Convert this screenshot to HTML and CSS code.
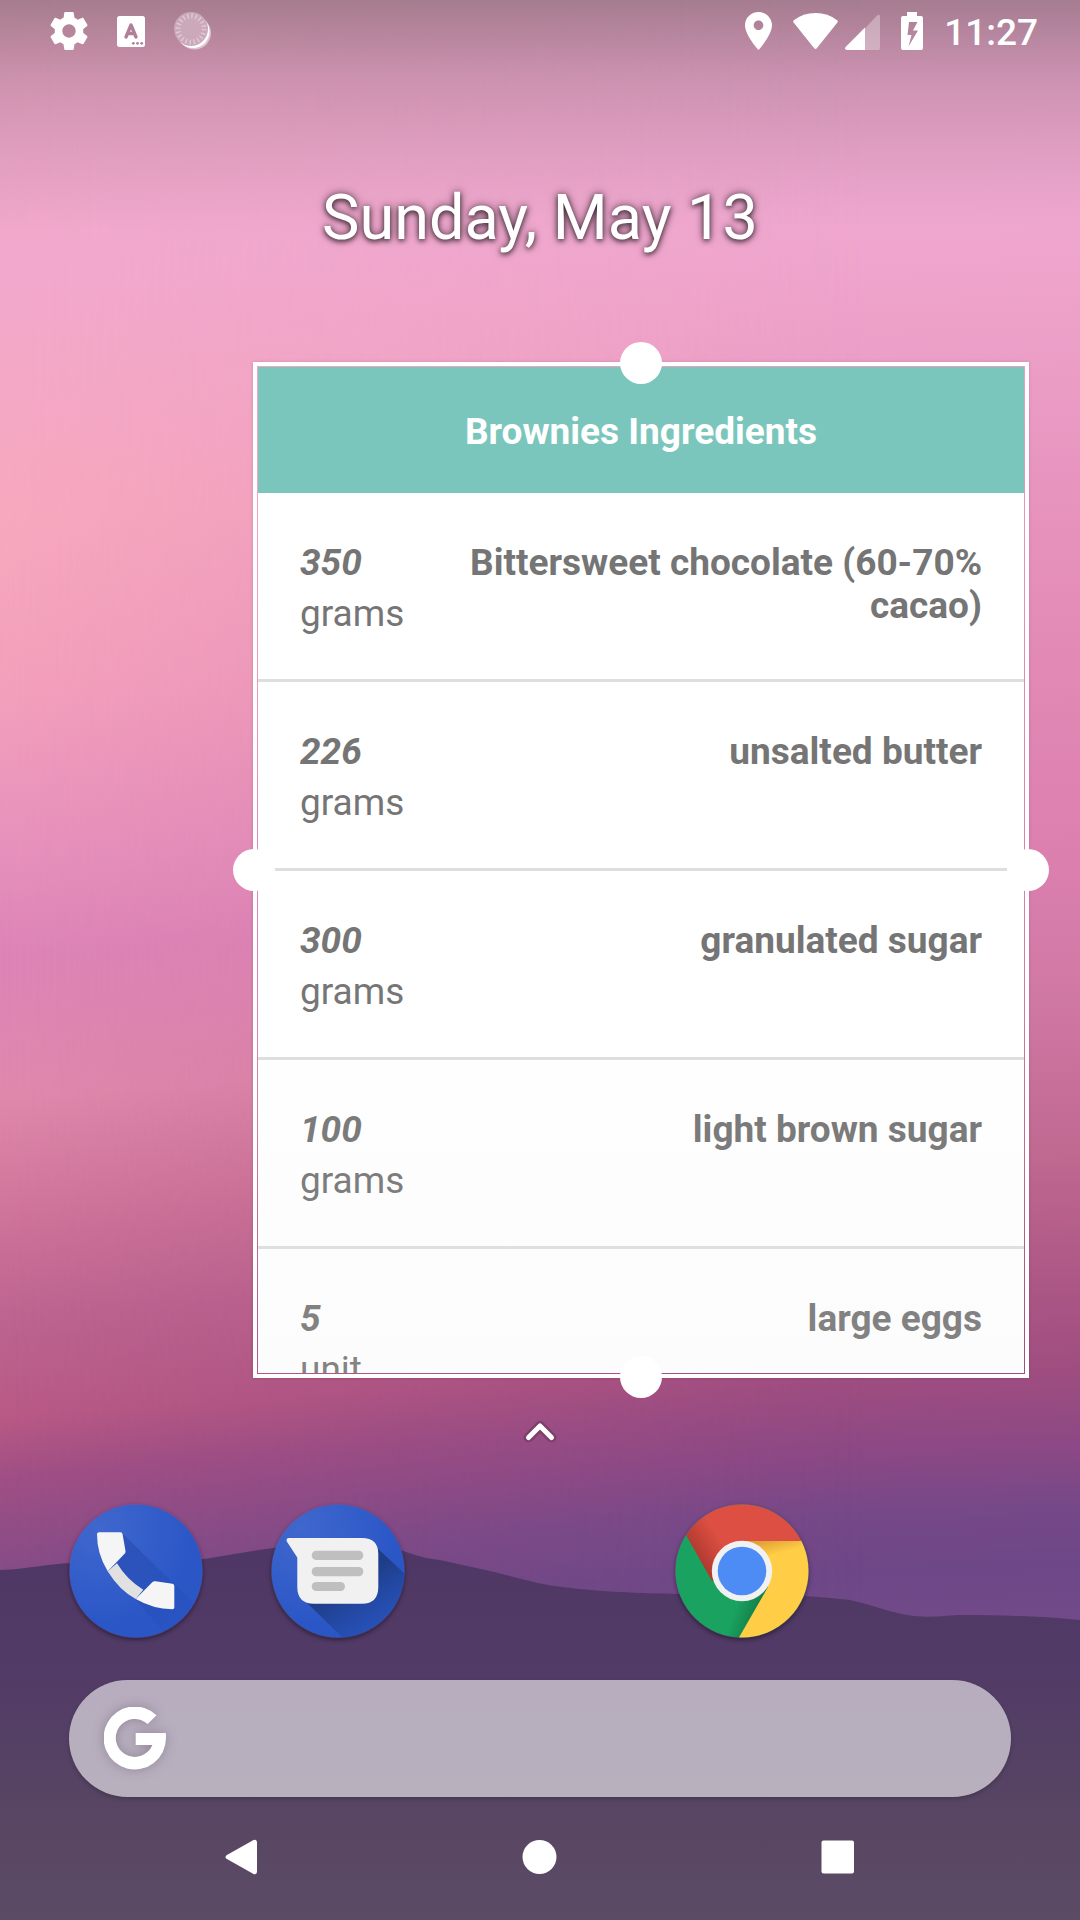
FILE: index.html
```html
<!DOCTYPE html>
<html lang="en">
<head>
<meta charset="utf-8">
<meta name="viewport" content="width=device-width, initial-scale=1">
<title>Home screen</title>
<link rel="stylesheet" href="styles.css">
</head>
<body>
<div class="screen">
  <div class="wallpaper" aria-hidden="true">
    <svg class="hills" viewBox="0 0 1080 1920" preserveAspectRatio="none">
      <defs>
        <linearGradient id="hill" x1="0" y1="0" x2="0" y2="1">
          <stop offset="0" stop-color="#4f3765"/>
          <stop offset=".35" stop-color="#523b66"/>
          <stop offset=".7" stop-color="#574563"/>
          <stop offset="1" stop-color="#5c4b65"/>
        </linearGradient>
      </defs>
      <path fill="url(#hill)" d="M0 1570C30 1569 50 1563 75 1563C120 1563 160 1563 203 1559C230 1555 250 1551 273 1548C310 1542 370 1542 403 1551C420 1557 430 1559 440 1560L490 1571C520 1578 540 1585 563 1587C600 1592 640 1593 680 1594C740 1593 790 1593 850 1600C880 1607 890 1613 915 1616C935 1618 945 1615 965 1615C1000 1615 1040 1616 1080 1620V1920H0Z"/>
    </svg>
  </div>

  <header class="status">
    <div class="status-group">
      <svg width="38" height="38" viewBox="2.2 2 19.6 20"><path fill="#fff" d="M19.43 12.98c.04-.32.07-.64.07-.98s-.03-.66-.07-.98l2.11-1.65c.19-.15.24-.42.12-.64l-2-3.46c-.12-.22-.39-.3-.61-.22l-2.49 1c-.52-.4-1.08-.73-1.69-.98l-.38-2.65C14.46 2.18 14.25 2 14 2h-4c-.25 0-.46.18-.49.42l-.38 2.65c-.61.25-1.17.59-1.69.98l-2.49-1c-.23-.09-.49 0-.61.22l-2 3.46c-.13.22-.07.49.12.64l2.11 1.65c-.04.32-.07.65-.07.98s.03.66.07.98l-2.11 1.65c-.19.15-.24.42-.12.64l2 3.46c.12.22.39.3.61.22l2.49-1c.52.4 1.08.73 1.69.98l.38 2.65c.03.24.24.42.49.42h4c.25 0 .46-.18.49-.42l.38-2.65c.61-.25 1.17-.59 1.69-.98l2.49 1c.23.09.49 0 .61-.22l2-3.46c.12-.22.07-.49-.12-.64l-2.11-1.65zM12 15.5c-1.93 0-3.5-1.57-3.5-3.5s1.57-3.5 3.5-3.5 3.5 1.57 3.5 3.5-1.57 3.5-3.5 3.5z"/></svg>
      <svg width="28" height="31" viewBox="0 0 28 31"><rect width="28" height="31" rx="2.5" fill="#fff"/><path d="M9 21L14 9L19 21M11 17.500H17" fill="none" stroke="#b27f98" stroke-width="3.400" stroke-linecap="round" stroke-linejoin="round"/><g fill="#b27f98"><circle cx="16.300" cy="27.300" r="1.400"/><circle cx="20.500" cy="27.300" r="1.400"/><circle cx="24.700" cy="27.300" r="1.400"/></g></svg>
      <svg width="38" height="38" viewBox="0 0 38 38"><circle cx="20.500" cy="21" r="16.500" fill="#fff" opacity=".5"/><circle cx="19" cy="19.500" r="16.500" fill="#fff"/><circle cx="17" cy="17" r="17" fill="#cba9ba"/><circle cx="17" cy="17" r="13" fill="none" stroke="#fff" stroke-opacity=".4" stroke-width="5" stroke-dasharray="1.300 2.784"/></svg>
    </div>
    <div class="status-group status-system">
      <svg width="27" height="38" viewBox="5 2 14 20" preserveAspectRatio="none"><path fill="#fff" d="M12 2C8.130 2 5 5.130 5 9c0 5.250 7 13 7 13s7-7.750 7-13c0-3.870-3.130-7-7-7zm0 9.500c-1.380 0-2.500-1.120-2.500-2.500s1.120-2.500 2.500-2.500 2.500 1.120 2.500 2.500-1.120 2.500-2.500 2.500z"/></svg>
      <div class="network">
        <svg width="45" height="38" viewBox="0 0 45 38"><path fill="#fff" d="M.6 10.500Q-.3 9.300.9 8.300Q10 1 22.500 1T44.100 8.300Q45.300 9.300 44.400 10.500L24 36Q22.500 37.800 21 36Z"/></svg>
        <svg width="35" height="38" viewBox="0 0 35 38"><path fill="#fff" opacity=".32" d="M20 16.500L32 3.500Q35 1.500 35 4.500V36Q35 38 33 38H20Z"/><path fill="#fff" d="M20 15.500V38H2Q-1 37.500.6 35Z"/></svg>
      </div>
      <svg width="22" height="38" viewBox="0 0 22 38"><path fill="#fff" fill-rule="evenodd" d="M6 0H16V4H20Q22 4 22 6V36Q22 38 20 38H2Q0 38 0 36V6Q0 4 2 4H6ZM8 10L6.500 23H10.500L7.500 34.500L17 18.500H12L16.500 10Z"/></svg>
      <time class="clock">11:27</time>
    </div>
  </header>

  <h1 class="date">Sunday, May 13</h1>

  <main class="widget">
    <section class="card">
      <h2 class="card-title">Brownies Ingredients</h2>
      <div class="scroller">
        <table class="ingredients">
          <tbody>
            <tr><td class="amount"><em>350</em><span>grams</span></td><th scope="row">Bittersweet chocolate (60-70% cacao)</th></tr>
            <tr><td class="amount"><em>226</em><span>grams</span></td><th scope="row">unsalted butter</th></tr>
            <tr><td class="amount"><em>300</em><span>grams</span></td><th scope="row">granulated sugar</th></tr>
            <tr><td class="amount"><em>100</em><span>grams</span></td><th scope="row">light brown sugar</th></tr>
            <tr><td class="amount"><em>5</em><span>unit</span></td><th scope="row">large eggs</th></tr>
          </tbody>
        </table>
      </div>
    </section>
    <button class="handle handle-top" aria-label="Resize top"></button>
    <button class="handle handle-right" aria-label="Resize right"></button>
    <button class="handle handle-bottom" aria-label="Resize bottom"></button>
    <button class="handle handle-left" aria-label="Resize left"></button>
  </main>

  <button class="drawer" aria-label="All apps">
    <svg width="36" height="26" viewBox="0 0 36 26"><g fill="none" stroke-linecap="round" stroke-linejoin="round"><path d="M6.500 18.500L18 7L29.500 18.500" stroke="#7d3f6c" stroke-width="10"/><path d="M6.500 18.500L18 7L29.500 18.500" stroke="#fff" stroke-width="5"/></g></svg>
  </button>

  <nav class="dock" aria-label="Favourite apps">
    <a class="app app-1" href="#phone" aria-label="Phone">
      <svg width="134" height="134" viewBox="0 0 134 134">
        <defs>
          <radialGradient id="blue" cx=".22" cy=".18" r=".75"><stop offset="0" stop-color="#3f67cd"/><stop offset="1" stop-color="#2a56c6"/></radialGradient>
          <linearGradient id="cast" gradientUnits="userSpaceOnUse" x1="55" y1="55" x2="105" y2="115"><stop offset="0" stop-color="#1d3fa0" stop-opacity=".4"/><stop offset="1" stop-color="#1d3fa0" stop-opacity=".1"/></linearGradient>
          <clipPath id="disc"><circle cx="67" cy="67" r="66.500"/></clipPath>
        </defs>
        <circle cx="67" cy="67" r="66.500" fill="url(#blue)"/>
        <path clip-path="url(#disc)" fill="url(#cast)" d="M54 30L134 108V134H100L66 95L39 67L48 59L56.500 48Z"/>
        <path fill="#e1e1e1" d="M38.700 67.300L48 59.300Q58 76 74.300 85.700L66.700 95Q50 86 38.700 67.300Z"/>
        <path fill="#f5f5f5" d="M30 28.300H51.500Q53.300 28.300 53.500 30L56.500 47Q56.700 48.500 55.800 49.500L38.700 67.300Q28 50 28 30.300Q28 28.300 30 28.300ZM66.700 95L83.500 78Q84.600 76.900 86.500 77.200L103.500 79.800Q105.300 80 105.300 82V103.500Q105.300 105.300 103.300 105.300Q84 105 66.700 95Z"/>
      </svg>
    </a>
    <a class="app app-2" href="#messages" aria-label="Messages">
      <svg width="134" height="134" viewBox="0 0 134 134">
        <defs>
          <linearGradient id="cast2" gradientUnits="userSpaceOnUse" x1="70" y1="85" x2="95" y2="125"><stop offset="0" stop-color="#1b3778" stop-opacity=".8"/><stop offset="1" stop-color="#234aa6" stop-opacity=".5"/></linearGradient>
        </defs>
        <circle cx="67" cy="67" r="66.500" fill="url(#blue)"/>
        <path clip-path="url(#disc)" fill="url(#cast2)" d="M104 42L134 70V134H72L32 95Z"/>
        <path fill="#f1f1f1" d="M18 34H91Q107.300 34 107.300 50V83Q107.300 99.700 91 99.700H43Q26.300 99.700 26.300 83V53.500L15.800 37.500Q14.800 34 18 34Z"/>
        <g fill="#bfbfbf"><rect x="40.700" y="46.700" width="51.600" height="9.300" rx="4.600"/><rect x="40.700" y="63" width="51.600" height="9.300" rx="4.600"/><rect x="40.700" y="78" width="33.300" height="9" rx="4.500"/></g>
      </svg>
    </a>
    <a class="app app-4" href="#chrome" aria-label="Chrome">
      <svg width="134" height="134" viewBox="0 0 134 134">
        <defs>
          <linearGradient id="redshade" gradientUnits="userSpaceOnUse" x1="22" y1="52" x2="46" y2="36"><stop offset="0" stop-color="#b23a30"/><stop offset="1" stop-color="#dd4f43"/></linearGradient>
          <linearGradient id="yellowshade" gradientUnits="userSpaceOnUse" x1="90" y1="37" x2="94" y2="52"><stop offset="0" stop-color="#e2a236"/><stop offset="1" stop-color="#ffcd46"/></linearGradient>
          <linearGradient id="greenshade" gradientUnits="userSpaceOnUse" x1="60" y1="105" x2="80" y2="112"><stop offset="0" stop-color="#1aa260"/><stop offset="1" stop-color="#14814b"/></linearGradient>
        </defs>
        <g clip-path="url(#disc)">
          <rect width="134" height="134" fill="url(#greenshade)"/>
          <path fill="url(#redshade)" d="M11 31L37 77L67 67L134 37V0H0V31Z"/>
          <path fill="url(#yellowshade)" d="M67 37H134V134H63.700L93 83Z"/>
        </g>
        <circle cx="67" cy="67" r="30.200" fill="#f1f1f1"/><circle cx="67" cy="67" r="24.300" fill="#4d8cf5"/>
      </svg>
    </a>
  </nav>

  <button class="search" aria-label="Google Search">
    <svg width="64" height="64" viewBox="0 0 64 64"><path fill="#fff" d="M52.500 8.300L43.700 17A19 19 0 1 0 48.400 38H31.700V26H61.800Q62 28 62 31A31.200 31.500 0 1 1 52.500 8.300Z"/></svg>
  </button>

  <nav class="navbar" aria-label="System navigation">
    <button aria-label="Back"><svg width="36" height="36" viewBox="0 0 36 36"><path fill="#fff" d="M33 3V33Q32.500 36 29.500 35L2.500 19.800Q.5 18 2.500 16.200L29.500 1Q32.500 0 33 3Z"/></svg></button>
    <button aria-label="Home"><svg width="36" height="36" viewBox="0 0 36 36"><circle cx="17.500" cy="18" r="17" fill="#fff"/></svg></button>
    <button aria-label="Recent apps"><svg width="36" height="36" viewBox="0 0 36 36"><rect x="1.500" y="1.500" width="32.500" height="33" rx="2" fill="#fff"/></svg></button>
  </nav>
</div>
</body>
</html>
```
FILE: styles.css
```css
* { box-sizing: border-box; }

body {
  margin: 0;
  font-family: Roboto, "Noto Sans", sans-serif;
  color: #fff;
}

button {
  margin: 0;
  padding: 0;
  border: 0;
  background: none;
  color: inherit;
  font: inherit;
}

svg { display: block; flex: none; }

.screen {
  position: relative;
  isolation: isolate;
  display: flex;
  flex-direction: column;
  height: 100vh;
  overflow: hidden;
}

/* Sunset sky: one vertical ramp, with a warmer one fading in from the left */
.wallpaper {
  position: absolute;
  inset: 0;
  z-index: -1;
  background: linear-gradient(178deg,
    #eba6cb 0%, #f0a8d0 12%, #eda1c9 18%, #e794bf 27%, #e289b5 36%,
    #dc80b0 45%, #d078a4 53%, #bf6890 61%, #ad5886 67%, #9f4d80 72%,
    #8a4885 76%, #754888 79%, #6d4787 82%, #754c8c 86%);
}

.wallpaper::before {
  content: "";
  position: absolute;
  inset: 0;
  background: linear-gradient(176deg,
    #eda6c6 0%, #f1a8cc 14%, #f4a8c5 19%, #f7a8bd 26%, #f29fbb 35%,
    #e590bb 43%, #dc84b6 48%, #e088ac 55%, #ce7399 61%, #bd6490 66%,
    #b85985 71%, #a04f84 74%, #8a4c86 78%, #774a86 82%);
  -webkit-mask-image: linear-gradient(to right, #000, transparent 80%);
  mask-image: linear-gradient(to right, #000, transparent 80%);
}

.wallpaper::after {
  content: "";
  position: absolute;
  inset: 0;
  background: linear-gradient(rgba(40, 50, 40, .36), rgba(50, 50, 50, .18) 4%, rgba(50, 50, 50, .08) 8%, transparent 12%);
}

.hills {
  position: absolute;
  inset: 0;
  width: 100%;
  height: 100%;
}

.status {
  display: flex;
  justify-content: space-between;
  height: 62px;
  padding: 0 42px 0 50px;
}

.status-group {
  display: flex;
  align-items: center;
  gap: 29px;
}

.status-system { gap: 21px; }

.network { display: flex; gap: 7px; }

.clock {
  padding-top: 3px;
  font-size: 37px;
  line-height: 44px;
  font-weight: 500;
}

.date {
  margin: 0;
  padding: 119px 0 107px;
  font-size: 63px;
  line-height: 74px;
  font-weight: 400;
  text-align: center;
  text-shadow: 0 0 8px rgba(0, 0, 0, .6), 0 2px 5px rgba(0, 0, 0, .6);
}

.widget {
  position: relative;
  flex: 1 1 0;
  min-height: 0;
  display: flex;
  margin: 0 51px 0 253px;
  padding: 1px;
  border: 4px solid #fff;
  box-shadow: 0 0 3px rgba(0, 0, 0, .15);
}

.card {
  position: relative;
  flex: 1;
  min-width: 0;
  display: flex;
  flex-direction: column;
  background: #fff;
  overflow: hidden;
}

/* Veil that fades the last rows of the list */
.card::after {
  content: "";
  position: absolute;
  inset: 0;
  pointer-events: none;
  background: linear-gradient(transparent 60%, rgba(230, 230, 230, .13));
}

.card-title {
  flex: none;
  margin: 0;
  padding: 43px 42px 40px;
  background: #7bc6bc;
  font-size: 37px;
  line-height: 43px;
  font-weight: 700;
  text-align: center;
}

.scroller {
  flex: 1;
  min-height: 0;
  overflow-y: auto;
  scrollbar-width: none;
}

.ingredients {
  width: 100%;
  border-spacing: 0;
  color: #757575;
  font-size: 37px;
  line-height: 43px;
}

.ingredients td,
.ingredients th {
  padding: 48px 42px 44px;
  border-bottom: 3px solid #dedede;
  vertical-align: top;
}

.ingredients .amount { padding-right: 0; }

.ingredients th {
  font-weight: 700;
  text-align: right;
}

.amount em,
.amount span { display: block; }

.amount em {
  margin-bottom: 8px;
  font-weight: 700;
}

.handle {
  position: absolute;
  width: 42px;
  height: 42px;
  border-radius: 50%;
  background: #fff;
}

.handle-top { top: -24px; left: calc(50% - 21px); }
.handle-bottom { bottom: -24px; left: calc(50% - 21px); }
.handle-left { left: -24px; top: calc(50% - 21px); }
.handle-right { right: -24px; top: calc(50% - 21px); }

.drawer {
  align-self: center;
  padding: 41px 24px 59px;
}

.dock {
  display: grid;
  grid-template-columns: repeat(5, 1fr);
  justify-items: center;
  padding: 0 35px;
}

.app {
  border-radius: 50%;
  box-shadow: 0 2px 4px rgba(0, 0, 0, .4);
}

.app-1 { grid-column: 1; }
.app-2 { grid-column: 2; }
.app-4 { grid-column: 4; }

.search {
  display: flex;
  align-items: center;
  height: 117px;
  margin: 42px 69px 0;
  padding: 0 35px;
  border-radius: 59px;
  background: rgba(255, 255, 255, .58);
  box-shadow: 0 2px 4px rgba(0, 0, 0, .2);
}

.search svg { filter: drop-shadow(0 0 6px rgba(60, 40, 70, .3)); }

.navbar {
  display: grid;
  grid-template-columns: repeat(3, 1fr);
  height: 123px;
  padding: 0 93px 3px;
}

.navbar button {
  display: grid;
  place-items: center;
}
```
